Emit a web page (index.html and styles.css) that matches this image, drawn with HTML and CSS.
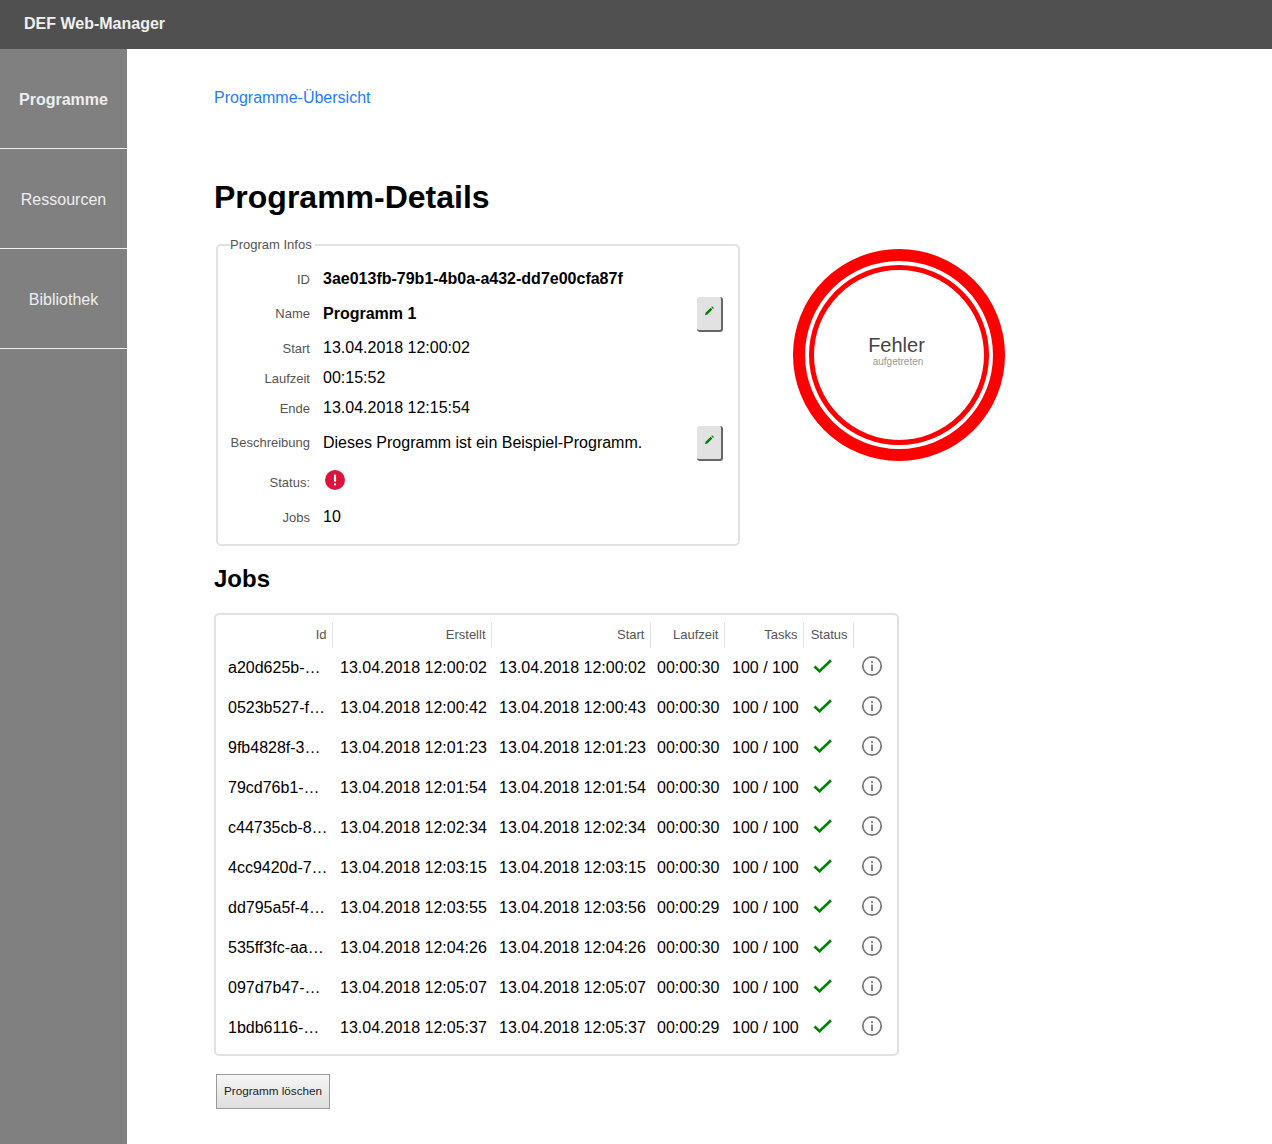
FILE: index.html
```html
<!DOCTYPE html>
<html lang="de">
	<head>
		<meta charset="UTF-8" />
		<title>DEF Web-Manager</title>
		<link rel="stylesheet" href="styles.css">
	</head>
	<body>
		<svg class="defs" width="0" height="0" aria-hidden="true">
			<symbol id="pencil" viewBox="0 0 12 12"><path d="M2 10.2l.6-2.4 5-5 1.8 1.8-5 5z" fill="#008000"/><path d="M8.3 2.1l.8-.8 1.8 1.8-.8.8z" fill="#008000"/></symbol>
			<symbol id="check" viewBox="0 0 20 14"><path d="M1.5 7.5l5 4.6L18 1.2" fill="none" stroke="#008000" stroke-width="2.6"/></symbol>
			<symbol id="info" viewBox="0 0 22 22"><circle cx="11" cy="11" r="9.2" fill="none" stroke="#777" stroke-width="1.7"/><rect x="10.1" y="9.6" width="1.8" height="6.2" fill="#777"/><rect x="10.1" y="6.2" width="1.8" height="1.9" fill="#777"/></symbol>
		</svg>
		<header class="topbar">DEF Web-Manager</header>
		<div class="shell">
			<nav class="sidebar">
				<a class="nav-item active" href="#">Programme</a>
				<a class="nav-item" href="#">Ressourcen</a>
				<a class="nav-item" href="#">Bibliothek</a>
			</nav>
			<main class="content">
				<a class="crumb" href="#">Programme-Übersicht</a>
				<h1>Programm-Details</h1>
				<div class="details">
					<fieldset class="infos">
						<legend>Program Infos</legend>
						<div class="row row-id"><span class="key">ID</span><strong class="val">3ae013fb-79b1-4b0a-a432-dd7e00cfa87f</strong></div>
						<div class="row row-edit">
							<span class="key">Name</span><strong class="val">Programm 1</strong>
							<button class="edit" type="button" aria-label="Name bearbeiten"><svg width="12" height="12"><use href="#pencil"/></svg></button>
						</div>
						<div class="row row-plain"><span class="key">Start</span><span class="val">13.04.2018 12:00:02</span></div>
						<div class="row row-plain"><span class="key">Laufzeit</span><span class="val">00:15:52</span></div>
						<div class="row row-plain"><span class="key">Ende</span><span class="val">13.04.2018 12:15:54</span></div>
						<div class="row row-edit row-desc">
							<span class="key">Beschreibung</span><span class="val">Dieses Programm ist ein Beispiel-Programm.</span>
							<button class="edit" type="button" aria-label="Beschreibung bearbeiten"><svg width="12" height="12"><use href="#pencil"/></svg></button>
						</div>
						<div class="row row-status">
							<span class="key">Status:</span>
							<span class="val"><svg class="status-icon" width="20" height="20" viewBox="0 0 20 20"><circle cx="10" cy="10" r="10" fill="#dc143c"/><rect x="8.9" y="4.4" width="2.2" height="7.4" rx="1" fill="#fff"/><rect x="8.9" y="13.2" width="2.2" height="2.2" rx="1" fill="#fff"/></svg></span>
						</div>
						<div class="row row-jobs"><span class="key">Jobs</span><span class="val">10</span></div>
					</fieldset>
					<div class="gauge">
						<div class="gauge-inner">
							<span class="gauge-title">Fehler</span>
							<span class="gauge-sub">aufgetreten</span>
						</div>
					</div>
				</div>
				<h2>Jobs</h2>
				<div class="panel">
					<table class="jobs">
						<colgroup>
							<col class="c-id"><col class="c-date"><col class="c-date"><col class="c-time"><col class="c-tasks"><col class="c-status"><col class="c-info">
						</colgroup>
						<thead>
							<tr><th>Id</th><th>Erstellt</th><th>Start</th><th>Laufzeit</th><th>Tasks</th><th class="th-status">Status</th><th></th></tr>
						</thead>
						<tbody>
							<tr><td>a20d625b-…</td><td class="td-date">13.04.2018 12:00:02</td><td class="td-date">13.04.2018 12:00:02</td><td>00:00:30</td><td class="td-tasks">100 / 100</td><td class="td-check"><svg width="20" height="14"><use href="#check"/></svg></td><td class="td-info"><svg width="22" height="22"><use href="#info"/></svg></td></tr>
							<tr><td>0523b527-f…</td><td class="td-date">13.04.2018 12:00:42</td><td class="td-date">13.04.2018 12:00:43</td><td>00:00:30</td><td class="td-tasks">100 / 100</td><td class="td-check"><svg width="20" height="14"><use href="#check"/></svg></td><td class="td-info"><svg width="22" height="22"><use href="#info"/></svg></td></tr>
							<tr><td>9fb4828f-3…</td><td class="td-date">13.04.2018 12:01:23</td><td class="td-date">13.04.2018 12:01:23</td><td>00:00:30</td><td class="td-tasks">100 / 100</td><td class="td-check"><svg width="20" height="14"><use href="#check"/></svg></td><td class="td-info"><svg width="22" height="22"><use href="#info"/></svg></td></tr>
							<tr><td>79cd76b1-…</td><td class="td-date">13.04.2018 12:01:54</td><td class="td-date">13.04.2018 12:01:54</td><td>00:00:30</td><td class="td-tasks">100 / 100</td><td class="td-check"><svg width="20" height="14"><use href="#check"/></svg></td><td class="td-info"><svg width="22" height="22"><use href="#info"/></svg></td></tr>
							<tr><td>c44735cb-8…</td><td class="td-date">13.04.2018 12:02:34</td><td class="td-date">13.04.2018 12:02:34</td><td>00:00:30</td><td class="td-tasks">100 / 100</td><td class="td-check"><svg width="20" height="14"><use href="#check"/></svg></td><td class="td-info"><svg width="22" height="22"><use href="#info"/></svg></td></tr>
							<tr><td>4cc9420d-7…</td><td class="td-date">13.04.2018 12:03:15</td><td class="td-date">13.04.2018 12:03:15</td><td>00:00:30</td><td class="td-tasks">100 / 100</td><td class="td-check"><svg width="20" height="14"><use href="#check"/></svg></td><td class="td-info"><svg width="22" height="22"><use href="#info"/></svg></td></tr>
							<tr><td>dd795a5f-4…</td><td class="td-date">13.04.2018 12:03:55</td><td class="td-date">13.04.2018 12:03:56</td><td>00:00:29</td><td class="td-tasks">100 / 100</td><td class="td-check"><svg width="20" height="14"><use href="#check"/></svg></td><td class="td-info"><svg width="22" height="22"><use href="#info"/></svg></td></tr>
							<tr><td>535ff3fc-aa…</td><td class="td-date">13.04.2018 12:04:26</td><td class="td-date">13.04.2018 12:04:26</td><td>00:00:30</td><td class="td-tasks">100 / 100</td><td class="td-check"><svg width="20" height="14"><use href="#check"/></svg></td><td class="td-info"><svg width="22" height="22"><use href="#info"/></svg></td></tr>
							<tr><td>097d7b47-…</td><td class="td-date">13.04.2018 12:05:07</td><td class="td-date">13.04.2018 12:05:07</td><td>00:00:30</td><td class="td-tasks">100 / 100</td><td class="td-check"><svg width="20" height="14"><use href="#check"/></svg></td><td class="td-info"><svg width="22" height="22"><use href="#info"/></svg></td></tr>
							<tr><td>1bdb6116-…</td><td class="td-date">13.04.2018 12:05:37</td><td class="td-date">13.04.2018 12:05:37</td><td>00:00:29</td><td class="td-tasks">100 / 100</td><td class="td-check"><svg width="20" height="14"><use href="#check"/></svg></td><td class="td-info"><svg width="22" height="22"><use href="#info"/></svg></td></tr>
						</tbody>
					</table>
				</div>
				<button class="delete" type="button">Programm löschen</button>
			</main>
		</div>
	</body>
</html>
```

FILE: styles.css
```css
html,body{
	margin:0;
	padding:0;
}
body{
	background-color:#fff;
	color:#000;
	font-family:"Liberation Sans",Arial,sans-serif;
	font-size:16px;
}
.defs{
	display:block;
	height:0;
}
.topbar{
	box-sizing:border-box;
	height:49px;
	padding:14px 0 0 24px;
	line-height:20px;
	background-color:#505050;
	color:#f0f0f0;
	font-weight:bold;
}
.shell{
	display:flex;
	min-height:1095px;
}
.sidebar{
	flex:none;
	width:127px;
	background-color:#808080;
}
.nav-item{
	display:flex;
	box-sizing:border-box;
	height:100px;
	padding-top:2px;
	align-items:center;
	justify-content:center;
	border-bottom:1px solid #f0f0f0;
	color:#eee;
	text-decoration:none;
}
.nav-item.active{
	font-weight:bold;
}
.content{
	flex:1;
	padding:39px 0 0 87px;
}
.crumb{
	display:block;
	line-height:20px;
	color:#1e7dff;
	text-decoration:none;
}
h1{
	margin:69px 0 0;
	font-size:32px;
	line-height:40px;
}
.details{
	display:flex;
	align-items:flex-start;
	margin-top:20px;
}
.infos{
	box-sizing:border-box;
	width:524px;
	height:309px;
	margin:0 0 0 2px;
	padding:0 15px 0 12px;
	border:2px solid #e2e2e2;
	border-radius:5px;
}
.infos legend{
	padding:0 3px 0 0;
	margin-left:0;
	color:#555;
	font-size:13px;
	line-height:15px;
}
.row{
	display:flex;
	align-items:center;
}
.key{
	flex:none;
	width:80px;
	margin-right:13px;
	text-align:right;
	color:#555;
	font-size:13px;
}
.val{
	flex:1;
	line-height:20px;
}
.row-id{
	height:34px;
	margin-top:10px;
}
.row-edit .key{
	padding-bottom:2px;
}
.row-edit{
	height:36px;
	margin-bottom:1px;
}
.row-plain{
	height:30px;
}
.row-desc{
	margin-top:2px;
}
.row-status{
	height:38px;
	margin-top:1px;
}
.row-status .key{
	padding-top:2px;
}
.row-jobs{
	height:34px;
}
.edit{
	flex:none;
	box-sizing:border-box;
	display:flex;
	align-items:center;
	justify-content:center;
	width:26px;
	height:35px;
	padding:0 0 5px;
	border:0;
	border-right:2px solid #666;
	border-bottom:2px solid #666;
	border-radius:3px;
	background-color:#e2e2e2;
}
.status-icon{
	display:block;
	margin:-3px 0 0 1.5px;
}
.gauge{
	box-sizing:border-box;
	width:212px;
	height:212px;
	margin:12px 0 0 53px;
	padding:4px;
	border:12px solid #f00;
	border-radius:50%;
}
.gauge-inner{
	box-sizing:border-box;
	display:flex;
	flex-direction:column;
	align-items:center;
	justify-content:center;
	height:100%;
	padding:0 5px 8px 0;
	border:5px solid #f00;
	border-radius:50%;
}
.gauge-title{
	color:#444;
	font-size:20px;
	line-height:21px;
}
.gauge-sub{
	margin-left:3px;
	color:#999;
	font-size:10px;
	line-height:11px;
}
h2{
	margin:16px 0 0;
	font-size:24px;
	line-height:34px;
}
.panel{
	box-sizing:border-box;
	width:685px;
	height:443px;
	margin-top:17px;
	padding-top:7px;
	border:2px solid #e2e2e2;
	border-radius:5px;
}
.jobs{
	table-layout:fixed;
	width:681px;
	border-collapse:collapse;
}
.c-id{width:116px}
.c-date{width:159px}
.c-time{width:74px}
.c-tasks{width:79px}
.c-status{width:50px}
.c-info{width:44px}
.jobs th{
	box-sizing:border-box;
	height:26px;
	padding:0 5px 2px 0;
	border-right:1px solid #e2e2e2;
	color:#555;
	font-size:13px;
	font-weight:normal;
	text-align:right;
}
.jobs th:last-child{
	border-right:0;
}
.jobs td{
	box-sizing:border-box;
	height:40px;
	padding:0 0 0 7px;
	white-space:nowrap;
}
.jobs td:first-child{
	padding:0 0 0 12px;
}
.jobs svg{
	display:block;
}
.jobs .td-date,.jobs .td-tasks{
	padding-left:8px;
}
.jobs .td-check{
	padding:0 0 4px 10px;
}
.jobs .td-info{
	padding:0 0 4px 8px;
}
.delete{
	display:block;
	box-sizing:border-box;
	width:114px;
	height:35px;
	margin:18px 0 0 2px;
	padding:0 0 2px;
	border:1px solid #999;
	background:linear-gradient(#f6f6f6,#dedede);
	color:#222;
	font-family:"Liberation Sans",Arial,sans-serif;
	font-size:11.7px;
}
```
